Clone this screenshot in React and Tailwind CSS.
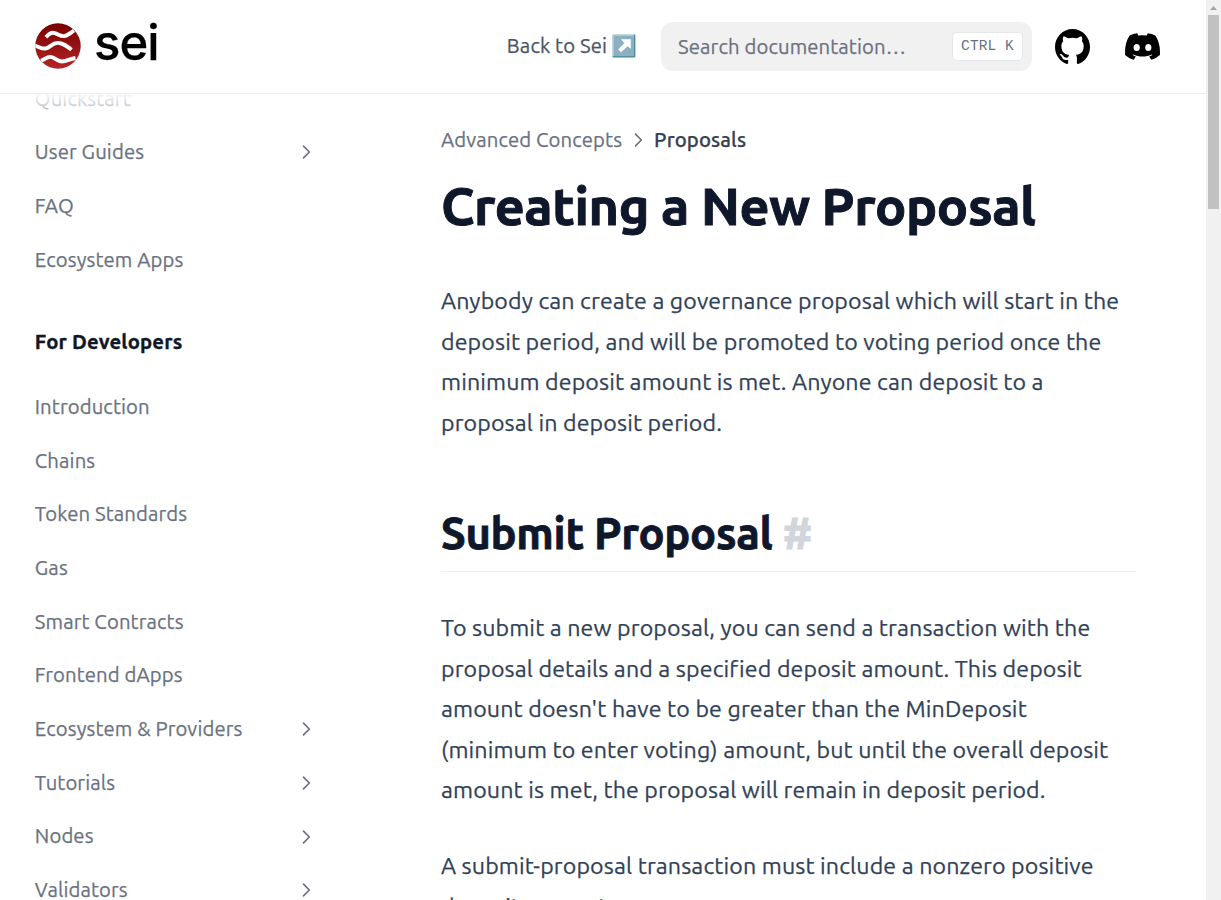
const userLinks = [
  { label: "Quickstart" },
  { label: "User Guides", expandable: true },
  { label: "FAQ" },
  { label: "Ecosystem Apps" },
];

const developerLinks = [
  { label: "Introduction" },
  { label: "Chains" },
  { label: "Token Standards" },
  { label: "Gas" },
  { label: "Smart Contracts" },
  { label: "Frontend dApps" },
  { label: "Ecosystem & Providers", expandable: true },
  { label: "Tutorials", expandable: true },
  { label: "Nodes", expandable: true },
  { label: "Validators", expandable: true },
];

function Chevron({ className }) {
  return (
    <svg viewBox="0 0 24 24" fill="none" stroke="currentColor" className={className}>
      <path strokeLinecap="round" strokeLinejoin="round" strokeWidth="2" d="M9 5l7 7-7 7" />
    </svg>
  );
}

function Logo() {
  return (
    <div className="flex items-center gap-[13px]">
      <svg viewBox="0 0 46 46" className="-mt-[2px] size-[46px]">
        <defs>
          <linearGradient id="disc" x1="0" y1="0" x2="0" y2="1">
            <stop offset="0" stopColor="#780000" />
            <stop offset="1" stopColor="#b52427" />
          </linearGradient>
          <clipPath id="round">
            <circle cx="23" cy="23" r="22.7" />
          </clipPath>
        </defs>
        <circle cx="23" cy="23" r="22.7" fill="url(#disc)" />
        <g clipPath="url(#round)" fill="none" stroke="#fff" strokeWidth="3.9" strokeLinejoin="round">
          <path d="M11 14.200c3-3.600 5.600-5.300 8.800-4.100 3.500 1.200 5.800 3.400 9.400 3 3.400-.4 5.300-2.500 9.800-5.600" />
          <path d="M-1 22.500c5 .8 7.500 3.900 12 2.900 4.200-1 6.500-5.700 11.800-5.500 5 .2 8.200 2.600 13.700 6.800" />
          <path d="M6 37.800c4-1.600 6-4.200 9.500-3.900 4.500.4 6.500 4.600 11.500 4.600 4.600 0 7.500-2.600 13.500-3.500" />
        </g>
      </svg>
      <span className="-mt-[8px] font-['Inter'] text-[49px] leading-none font-[450] tracking-[-1px] text-black">sei</span>
    </div>
  );
}

function GithubIcon() {
  return (
    <svg viewBox="3 3 18 18" className="size-[35px]" fill="currentColor">
      <path d="M12 3C7.0275 3 3 7.12937 3 12.2276C3 16.3109 5.57625 19.7597 9.15374 20.9824C9.60374 21.0631 9.77249 20.7863 9.77249 20.5441C9.77249 20.3249 9.76125 19.5982 9.76125 18.8254C7.5 19.2522 6.915 18.2602 6.735 17.7412C6.63375 17.4759 6.19499 16.6569 5.8125 16.4378C5.4975 16.2647 5.0475 15.838 5.80124 15.8264C6.51 15.8149 7.01625 16.4954 7.18499 16.7723C7.99499 18.1679 9.28875 17.7758 9.80625 17.5335C9.885 16.9337 10.1212 16.53 10.38 16.2993C8.3775 16.0687 6.285 15.2728 6.285 11.7432C6.285 10.7397 6.63375 9.9092 7.20749 9.26326C7.1175 9.03257 6.8025 8.08674 7.2975 6.81794C7.2975 6.81794 8.05125 6.57571 9.77249 7.76377C10.4925 7.55615 11.2575 7.45234 12.0225 7.45234C12.7875 7.45234 13.5525 7.55615 14.2725 7.76377C15.9937 6.56418 16.7475 6.81794 16.7475 6.81794C17.2424 8.08674 16.9275 9.03257 16.8375 9.26326C17.4113 9.9092 17.76 10.7281 17.76 11.7432C17.76 15.2843 15.6563 16.0687 13.6537 16.2993C13.98 16.5877 14.2613 17.1414 14.2613 18.0065C14.2613 19.2407 14.25 20.2326 14.25 20.5441C14.25 20.7863 14.4188 21.0746 14.8688 20.9824C16.6554 20.364 18.2079 19.1866 19.3078 17.6162C20.4077 16.0457 20.9995 14.1611 21 12.2276C21 7.12937 16.9725 3 12 3Z" />
    </svg>
  );
}

function DiscordIcon() {
  return (
    <svg viewBox="0 0 35 27" className="h-[27px] w-[35px]">
      <path
        fill="currentColor"
        d="M12.200.3C9.500.700 7 1.400 4.700 2.500 1.200 7.700-.3 13.500.1 21.900c2.600 2.300 5.500 3.900 8.700 4.900l2-3.200c-1.200-.4-2.200-.9-3.200-1.500l.8-.6c6 2.700 12.300 2.700 18.200 0l.8.6c-1 .6-2.100 1.100-3.200 1.500l2 3.200c3.200-1 6.100-2.600 8.700-4.900.5-8.400-1.200-14.300-4.600-19.400C28 1.400 25.500.7 22.800.3l-1.100 2.200a29 29 0 0 0-8.400 0z"
      />
      <ellipse cx="11.700" cy="14.400" rx="3.100" ry="3.500" fill="#fff" />
      <ellipse cx="23.300" cy="14.400" rx="3.100" ry="3.500" fill="#fff" />
    </svg>
  );
}

function ArrowBadge() {
  return (
    <svg viewBox="0 0 24 24" className="-mt-[2px] size-[24px]">
      <rect x="0.500" y="0.500" width="22.700" height="22.500" rx="1" fill="#8db0c1" />
      <path d="M22.700.5v22.400H.6" fill="none" stroke="#46859b" strokeWidth="1.100" />
      <path d="M1.500 22V1.500H22" fill="none" stroke="#a9c9d6" strokeWidth="1" />
      <path d="M8.800 5.200h10v9.600l-3.200-2.600-6.600 6-2.800-2.600 6.300-6.700z" fill="#fff" />
    </svg>
  );
}

function NavItem({ label, expandable }) {
  return (
    <li className="flex h-[53.65px] items-center justify-between pr-[6px]">
      <a>{label}</a>
      {expandable && <Chevron className="size-[20px]" />}
    </li>
  );
}

export default function App() {
  return (
    <div className="flex h-[900px] w-[1221px] overflow-hidden bg-white font-[Ubuntu,'Noto_Sans',sans-serif] tracking-[0.12px] [-webkit-text-stroke:0.25px_currentColor]">
      <div className="flex min-w-0 flex-1 flex-col">
        <header className="z-10 flex h-[93px] shrink-0 items-center bg-white pr-[46px] pl-[35px] shadow-[0_2px_4px_rgba(0,0,0,.02),0_1px_0_rgba(0,0,0,.06)]">
          <Logo />
          <a className="ml-auto flex items-center gap-[5px] text-[20.3px] text-gray-600">
            Back to Sei <ArrowBadge />
          </a>
          <div className="ml-[25px] flex h-[49px] w-[371px] items-center justify-between rounded-[12px] bg-[#f1f1f1] pr-[9px] pl-[17px]">
            <span className="pt-[1px] text-[20.3px] text-gray-500">Search documentation…</span>
            <kbd className="flex h-[29px] w-[71px] items-center justify-center rounded-[5px] border border-gray-200 bg-white font-['Liberation_Mono',monospace] text-[14.500px] tracking-[0.1px] whitespace-pre text-gray-500 [-webkit-text-stroke:0px]">
              CTRL K
            </kbd>
          </div>
          <div className="ml-[23px] flex items-center gap-[35px] text-black">
            <GithubIcon />
            <DiscordIcon />
          </div>
        </header>

        <div className="flex min-h-0 flex-1">
          <aside className="relative w-[357px] shrink-0 overflow-hidden px-[34.8px] text-[20.3px] text-gray-500">
            <ul className="-mt-[21px]">
              {userLinks.map((item) => (
                <NavItem key={item.label} {...item} />
              ))}
            </ul>
            <h2 className="mt-[29px] flex h-[53px] items-center font-bold tracking-[0.15px] text-gray-900 [-webkit-text-stroke:0.35px_currentColor]">
              For Developers
            </h2>
            <ul className="mt-[12px]">
              {developerLinks.map((item) => (
                <NavItem key={item.label} {...item} />
              ))}
            </ul>
            <div className="absolute inset-x-0 top-0 h-[36px] bg-linear-to-b from-white to-transparent" />
          </aside>

          <main className="ml-[84px] w-[695px] overflow-hidden text-[23.2px] leading-[40.6px] text-slate-700">
            <nav className="mt-[32px] flex h-[29px] items-center text-[20.3px] leading-[29px] text-gray-500">
              <span>Advanced Concepts</span>
              <Chevron className="mx-[6px] size-[20px]" />
              <span className="font-medium text-gray-700">Proposals</span>
            </nav>
            <h1 className="mt-[23px] text-[52.2px] leading-[58px] font-bold tracking-[-0.38px] text-slate-900 [-webkit-text-stroke:1px_currentColor]">
              Creating a New Proposal
            </h1>
            <p className="mt-[45px]">
              Anybody can create a governance proposal which will start in the
              <br />
              deposit period, and will be promoted to voting period once the
              <br />
              minimum deposit amount is met. Anyone can deposit to a
              <br />
              proposal in deposit period.
            </p>
            <h2 className="mt-[64px] h-[66px] border-b border-neutral-200/70 text-[43.5px] leading-[54px] font-bold tracking-[-0.28px] text-slate-900 [-webkit-text-stroke:0.8px_currentColor]">
              Submit Proposal <span className="text-gray-300 [-webkit-text-stroke-color:var(--color-gray-300)]">#</span>
            </h2>
            <p className="mt-[34.7px]">
              To submit a new proposal, you can send a transaction with the
              <br />
              proposal details and a specified deposit amount. This deposit
              <br />
              amount doesn't have to be greater than the MinDeposit
              <br />
              (minimum to enter voting) amount, but until the overall deposit
              <br />
              amount is met, the proposal will remain in deposit period.
            </p>
            <p className="mt-[35.2px]">
              A submit-proposal transaction must include a nonzero positive
              <br />
              deposit amount.
            </p>
          </main>
        </div>
      </div>

      <div className="flex w-[15px] shrink-0 flex-col items-center bg-[#f1f1f1]">
        <svg viewBox="0 0 15 15" className="h-[15px] w-[15px]">
          <path d="M4 10l3.500-4 3.500 4z" fill="#a3a3a3" />
        </svg>
        <div className="h-[194px] w-[11px] bg-[#c1c1c1]" />
      </div>
    </div>
  );
}
